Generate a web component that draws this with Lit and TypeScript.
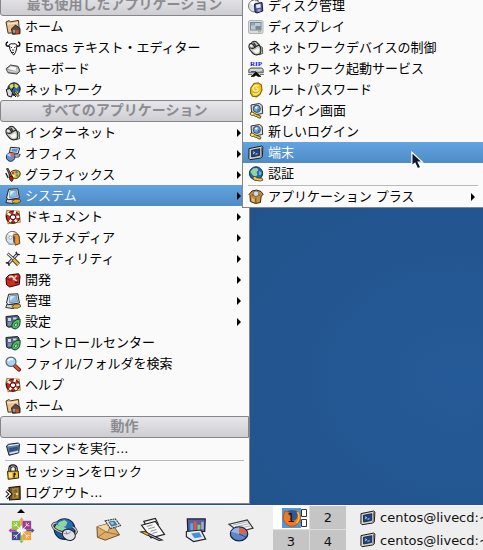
import { LitElement, html, css, svg, nothing, TemplateResult } from "lit";
import { customElement } from "lit/decorators.js";
import { classMap } from "lit/directives/class-map.js";

/* 16 x 16 glyphs used by the menus */
const wrench = svg`<path d="M7 13.500L10 11.200l5 .2 1 2-3.500 1.800-4.300-.2z" fill="#e0a92c" stroke="#3a2a08" stroke-width=".7"/>`;
const crtBase = svg`
  <path d="M2 11L.8 14.500l7.500 1.200 2.200-3.500z" fill="#d5d5cf" stroke="#222" stroke-width=".9"/>
  <path d="M3.600 1.300l9.200-.5 1.600 9.200-11 1.600L1.500 10z" fill="#ececea" stroke="#222" stroke-width="1"/>
  <path d="M4.800 2.800l6.700-.4 1 6.400-7.900 1z" fill="#86bdec" stroke="#3b5d86" stroke-width=".5"/>
  <path d="M5.200 3.200l4.600-.2-4.700 5z" fill="#d6eafb"/>`;
const lifebuoy = svg`
  <path d="M2 1.500L14 2.200 15.200 13 3.200 14.700.8 7z" fill="none" stroke="#a58322" stroke-width="1.200"/>
  <ellipse cx="8" cy="8.200" rx="6.600" ry="6.100" fill="#c9281c" stroke="#2a0705" stroke-width="1"/>
  <path d="M2.600 4.600l3 1.400M10.200 1.900L9.400 5M14.400 7.600l-3 .4M11.800 12.800l-2-2.400M4.600 12.900l1.800-2.400" stroke="#fff" stroke-width="2.300"/>
  <ellipse cx="8" cy="8.200" rx="2.700" ry="2.400" fill="#fafafa" stroke="#2a0705" stroke-width="1"/>`;
const mouse = svg`
  <path d="M10 5l4.300 2.200.4 6.300-3.500 1.300z" fill="#b7e6b4" stroke="#333" stroke-width=".8"/>
  <path d="M1 7.500C.8 5 1.500 3.500 3.200 3.400 4 1.500 6 .8 8.200 1.700l3 3.100c1.700 3.200 2.200 6.500.8 8.800-2.300 1.800-5 1.400-7.200-.4C2.800 11.500 1.300 10 1 7.500z" fill="#c9c9c5" stroke="#222" stroke-width="1.100"/>
  <path d="M3.200 3.500C5 3.800 6 5 6.500 6.800M2 7.800c2.200 1 4.200.5 5.500-1L11 5M5.500 2.500l2.300 3.200" stroke="#222" stroke-width="1.200" fill="none"/>
  <path d="M5 10.200c2-.2 3.800-1.200 5-2.800 1.200 2 1.400 4 .7 5.200-2 1-4.200.3-5.700-2.400z" fill="#f7f7f5"/><path d="M2.300 5.500l1.800.6" stroke="#fff" stroke-width="1.300"/>`;
const home = svg`
  <path d="M1 3l3-1.400 1.500 1.200L13.500 1.400l1 12-11.400.8z" fill="#e8c08c" stroke="#4b331a" stroke-width="1"/>
  <path d="M2.500 5l10.500-1.200" stroke="#f9e2bd" stroke-width="1.400"/>
  <path d="M6.500 10l4-4 4.500 3.500v5.200l-7.400.6z" fill="#5b4a48" stroke="#1d1514" stroke-width=".9"/>
  <path d="M7.800 10.800h2.400v3H7.800z" fill="#9b9ba2"/><path d="M10.800 11.200h2.900v3.300h-2.900z" fill="#d9541e"/>`;
const loginFace = svg`
  <path d="M3 2l8.500-1.500 2.700 2 .5 8-9 1.500-2-1.600z" fill="#d6dade" stroke="#333" stroke-width="1"/>
  <circle cx="8.800" cy="5.800" r="3.600" fill="#6fa3d2" stroke="#28435f" stroke-width=".9"/>
  <path d="M6.800 5c.6-1.300 1.800-1.600 3-1.300L8.500 6z" fill="#eef6fd"/><path d="M9.500 7.800l2-1.800" stroke="#28435f" stroke-width=".9"/>
  <path d="M2.500 9.500C4 8.500 6 9 6.500 10.500l6.500 2.700-.8 2-2.600-.7-.7-1.100-1.300.2-2-1.300c-1.300.5-3 0-3.500-1.300z" fill="#f0c435" stroke="#463407" stroke-width=".8"/>
  <circle cx="4.200" cy="10.700" r=".8" fill="#fff"/>`;
const controls = svg`
  <path d="M1 2.500L12.500 1.500 14 3v9l-10.500 1.200L1.500 12z" fill="#56647e" stroke="#1b2230" stroke-width="1"/>
  <path d="M3 4h3v3H3zM8 3.500h3.500v2H8z" fill="#cfd8e8"/><path d="M3 9h4M3 10.800h3" stroke="#9fb2d4" stroke-width="1"/>
  <path d="M7 13.700C6 9 9.500 5.500 15 5c.6 5-.7 9.400-5 10z" fill="#52bd6d" stroke="#0c4421" stroke-width="1"/>
  <path d="M9.300 12.200c0-2.500 1.400-3.600 3-3.200.2 2.200-.5 3.600-2 3.800" fill="#b5edb2" stroke="#0e5a2b" stroke-width=".9"/>`;
const globe = svg`
  <circle cx="8" cy="7.400" r="6.600" fill="#2465b3" stroke="#122c4b" stroke-width="1"/>
  <path d="M5 2.500l4-.6 1.500 2L8.700 6 9.500 9l-2.700 2L4 8.200 2.300 6z" fill="#93d4a4"/>
  <path d="M11 5l2.600 1.200-.8 3-2-.6z" fill="#6fb9c9"/>`;

const ICONS: Record<string, TemplateResult> = {
  home,
  emacs: svg`
    <path d="M3 2C.5 2.500.3 5.800 3 6.300l1.800-.8M13 2c2.500.5 2.700 3.800 0 4.300l-1.800-.8" fill="none" stroke="#111" stroke-width="1.400"/>
    <path d="M4 5.200C5.500 3.600 6.500 3.400 8 4c1.500-.6 2.500-.4 4 1.200L11.500 9l-1 3.500L8.800 15l-2-1.800L5 9.500z" fill="#fff" stroke="#111" stroke-width="1"/>
    <path d="M5.500 7l1.400.7M10.600 7l-1.400.7M7.500 9.500l.5 1.200.8-1.200M7 12.500h2" stroke="#111" stroke-width=".9" fill="none"/>`,
  keyboard: svg`
    <path d="M1 7.800L5.500 4l7.500 1.300 2 4.900-3 2.800-9-1.200z" fill="#a4a4a4" stroke="#444" stroke-width="1"/>
    <path d="M2.800 7.700l3-2.500 5.500 1-.6 3.700z" fill="#f4f4f4"/><path d="M11.800 6.300l2 3.800-2.800 1.500z" fill="#cfcfcf"/>
    <path d="M2.500 9.700l8.300 1.400" stroke="#dedede" stroke-width=".9"/>`,
  network: svg`
    <circle cx="9" cy="7" r="6.200" fill="#2d61b4" stroke="#111" stroke-width="1"/>
    <path d="M4.500 3L8 1.800 8.500 5 5.500 7zM9.800 1.500l3.700 2.300-1.700 2.600L9.500 5z" fill="#e9d932"/>
    <path d="M10 8l3.500 2-2 2.500z" fill="#89cd68"/><path d="M9 5l-3 5 5 5" stroke="#111" fill="none" stroke-width="1"/>
    <path d="M1.300 7.500L5 6.500l2.500 4.300L6.500 15l-3.700-1.200z" fill="#d8d8d8" stroke="#111" stroke-width="1"/>
    <path d="M10 8.500l4.300 5.200-1.800 1L9.300 10z" fill="#e2a523" stroke="#222" stroke-width=".7"/>`,
  mouse,
  office: svg`
    <path d="M5.500 1.300L14.700 2l-1.500 5.500L4.500 6.600z" fill="#ddeaf6" stroke="#223" stroke-width="1"/>
    <path d="M7 2.700l5.800.4-.8 2.900-5.800-.6z" fill="#5b9ad8"/>
    <path d="M4 8l9.500 1 1.700-1-1.200 3-8 .3z" fill="#d4d4d8" stroke="#223" stroke-width=".8"/>
    <circle cx="5.600" cy="11" r="4.300" fill="#668fd0" stroke="#1a2b4c" stroke-width="1"/>
    <path d="M5.600 11l-.3-4.200A4.300 4.300 0 0 1 9.700 10z" fill="#e4684c"/><path d="M5.600 11l-3.800-1.800A4.300 4.300 0 0 1 5.300 6.900z" fill="#b6d0f4"/>`,
  graphics: svg`
    <path d="M4.500 6.500c2-3 6.500-4.300 9.300-2.500 2.600 2 1.300 6-2 7.300-2.300.8-2.600-.7-4.500 0C5 12 3.500 9 4.500 6.500z" fill="#efb736" stroke="#3c2a08" stroke-width="1"/>
    <circle cx="8" cy="5.900" r="1.200" fill="#cf362b"/><circle cx="11.500" cy="5.300" r="1.200" fill="#3a78c9"/><circle cx="12.200" cy="8.500" r="1.200" fill="#3ba656"/><circle cx="8.700" cy="9" r="1" fill="#fff"/>
    <path d="M1.500 1.800l1.700-.3 3.700 8-1.300.8z" fill="#777" stroke="#111" stroke-width=".8"/>
    <path d="M4.500 10l2.600-1 1.200 3-1.500 2.600-2-1.800z" fill="#b12819" stroke="#2b0805" stroke-width=".8"/><path d="M.8 6l2.400 5" stroke="#222" stroke-width="1.400"/>`,
  system: svg`${crtBase}${wrench}`,
  lifebuoy,
  multimedia: svg`
    <circle cx="7.500" cy="8" r="6.600" fill="#dfe1e4" stroke="#666" stroke-width="1"/>
    <path d="M7.500 8L3 3.500A6 6 0 0 1 8 2z" fill="#fff"/><circle cx="5.500" cy="7.500" r="1.600" fill="#fff" stroke="#888" stroke-width=".7"/>
    <path d="M8 5.500C9.500 3.500 13.500 4 14 6l.8 7.500-4.500 1.700z" fill="#ef9433" stroke="#55340e" stroke-width=".9"/>
    <path d="M8 6l2.300.5-.3 7-1.700-1z" fill="#4d555c"/><path d="M3 13.800l7 .4" stroke="#8cb7d7" stroke-width="1.500"/>`,
  utilities: svg`
    <path d="M12.500 3L3 13" stroke="#222" stroke-width="3"/><path d="M12.500 3L3 13" stroke="#d8d8d8" stroke-width="1.300"/>
    <path d="M11 .9l1 2.300 2.800.4M.8 11.700l2.700.3.700 2.800" fill="none" stroke="#222" stroke-width="1.400"/>
    <path d="M2.500 2.500l6 5.500" stroke="#222" stroke-width="2.800"/><path d="M2.500 2.500l6 5.500" stroke="#eee" stroke-width="1.300"/>
    <path d="M8.500 8.500l5 5" stroke="#222" stroke-width="4.200"/><path d="M8.500 8.500l5 5" stroke="#e3b03a" stroke-width="2.700"/>`,
  develop: svg`
    <path d="M1 6l3-3 9.500-1.300L15 4l-.7 8.500L4.700 15 1.500 12.500z" fill="#cc2a22" stroke="#290504" stroke-width="1"/>
    <path d="M1.300 6.500l3.500 1.700 9.700-2.500" stroke="#7c1410" stroke-width=".9" fill="none"/>
    <path d="M4 5.500c1.500-1.700 3.600-1.500 4.300.3l3.500 3.700" stroke="#f5e6d6" stroke-width="1.600" fill="none"/>
    <path d="M11.500 3.500L8 8" stroke="#e0c9a0" stroke-width="1.500"/><path d="M10 10.500l2.800-.6" stroke="#111" stroke-width="1.500"/>`,
  controls,
  search: svg`
    <path d="M9.500 9.500l4.500 4.200" stroke="#5e1407" stroke-width="3.800" stroke-linecap="round"/><path d="M9.800 9.700l4 3.800" stroke="#e94f25" stroke-width="2.300" stroke-linecap="round"/>
    <ellipse cx="6" cy="5.800" rx="5" ry="4.600" fill="#a7d4f4" stroke="#5a6a7a" stroke-width="1.200"/><path d="M3 5.200C4 3.200 6 2.800 8 3.500" stroke="#fff" stroke-width="1.500" fill="none"/>`,
  run: svg`
    <path d="M1.500 5l2-1.700L13.500 2l1 1.300-.8 8.500-9.700 2.500z" fill="#5c7ea8" stroke="#1b2430" stroke-width="1"/>
    <path d="M2.200 5.600l11.500-1.900.2-.9L4 4.100z" fill="#eef3f7"/><path d="M4 7.200l9-1.700-.4 3.500-8 2z" fill="#35507a"/><path d="M4.500 12.600l8.800-2" stroke="#dfe6ed" stroke-width="1.500"/>`,
  lock: svg`
    <path d="M4.800 8V4.500C5 .8 11.300.8 11.300 4.500V8" fill="none" stroke="#111" stroke-width="3"/><path d="M4.800 8V4.500C5 1.200 11.300 1.200 11.300 4.500V8" fill="none" stroke="#ccc" stroke-width="1"/>
    <path d="M2.500 7.300L13.200 7l.5 7-10.500 1.300z" fill="#f2bd24" stroke="#33250a" stroke-width="1"/><path d="M4 9h3v4.500H4.300z" fill="#fae88c"/>
    <path d="M8.500 9.200a1.300 1.300 0 1 1 1 2.200l.5 2H8.200l.3-2z" fill="#111"/>`,
  logout: svg`
    <path d="M4 2.500l11-1.200.2 13L4.500 15z" fill="#6b5525" stroke="#1c1506" stroke-width="1.100"/><path d="M7 3.500l6.500-.7.2 10.500-6.200.5z" fill="#a98540"/>
    <path d="M8.500 5l3.700-.4v2.800l-3.500.4zM8.800 9.200l2-.2v3l-2 .2z" fill="#7f6227"/><circle cx="12" cy="9" r="1" fill="#f9e7a8"/>
    <path d="M1.500 5.500L5.500 9l-4 4" fill="none" stroke="#111" stroke-width="3.200"/><path d="M1.500 5.500L5.500 9l-4 4" fill="none" stroke="#fff" stroke-width="1.300"/>`,
  disk: svg`
    <circle cx="6.500" cy="8" r="6" fill="#e0e2e6" stroke="#777" stroke-width="1"/><path d="M6.500 8L2 5A6 6 0 0 1 7 2.500z" fill="#fff"/><path d="M3.500 2l4-1 3 1.800" stroke="#333" fill="none" stroke-width="1"/>
    <path d="M6.500 6l7.500-1.500.8 8.500L9 15l-2-1z" fill="#4c5a9a" stroke="#151a38" stroke-width="1"/><path d="M8 6.700l4.500-.9.3 3.700-4.300.8z" fill="#e9ebf4"/><path d="M9.500 11.500l3-.6.2 2.300-2.900.6z" fill="#a9b0cf"/>`,
  display: svg`
    <rect x=".5" y="1.500" width="14.500" height="13" rx="1.500" fill="#dcdcdc" stroke="#b4b4b4"/><rect x="2.500" y="3.500" width="10.500" height="7.500" fill="#94a4b0" stroke="#7c868d"/>
    <path d="M3 6.500h4V4h5.500v3H8v3.500H3z" fill="#b9cad8"/><path d="M7.500 7h5v3.500h-5z" fill="#768999"/><path d="M10 12.800h3" stroke="#8bb07a"/>`,
  rip: svg`
    <text x="8" y="5.300" text-anchor="middle" font-family="Liberation Serif, serif" font-weight="700" font-size="7" fill="#1212d8">RIP</text>
    <path d="M.8 8.500L3 7h10.500l1.700 1.300v3.500H.8z" fill="#b9bcbe" stroke="#555" stroke-width="1"/><path d="M2 8.900h12" stroke="#f2f2f2"/><path d="M3 10.500h5" stroke="#555"/><circle cx="13" cy="10.500" r=".8" fill="#4db84d"/>
    <path d="M8 11l5 4.500h-3L8 14l-2 1.500H3z" fill="#050505" stroke="#050505" stroke-width=".6"/><path d="M0 13.500h4M12 13.500h4" stroke="#777"/>`,
  password: svg`
    <path d="M6 1.500l4-.7 3.300 2L14 8l-2 4.500-3.500 2.300-4-.6L2.500 11l.3-5z" fill="#f1c21e" stroke="#8a6503" stroke-width="1.100"/>
    <path d="M10.500 4C7.500 2.500 4.600 4.600 5 7.200c.5 2.300 4 2.700 4.900.9.400-1.600-1.200-2.500-2.300-1.700M5 11.500c2.200 1.400 5 .6 6.400-2" fill="none" stroke="#fdf3a0" stroke-width="1.400"/>
    <path d="M4.700 9.300c2 2 4.600 1.700 6.200 0" fill="none" stroke="#c4930a" stroke-width=".8"/>`,
  login: loginFace,
  terminal: svg`
    <path d="M1 3.600L13.800 1l1.100 1-.6 9.800L12.600 13 2 14.700.9 13.500z" fill="#d3d4cf" stroke="#1d1d1b" stroke-width="1"/>
    <path d="M3.400 5.300l8.400-1.600-.3 6.800-7.900 1.500z" fill="#21437e" stroke="#0f1d38" stroke-width=".8"/>
    <path d="M5 6.700l1.700 1-1.600 1.200M7.500 9.200l2-.4" stroke="#fff" stroke-width=".8" fill="none"/><path d="M13.600 2.200L13 12.300" stroke="#6f6f6b" stroke-width="1"/>`,
  auth: svg`${globe}<path d="M5 11c1.300-1 3-.6 3.600.8l5.600.6.700 1.800-3 .9-4-.9c-1.500.6-3.200-.6-2.900-3.200z" fill="#f0cf4e" stroke="#4a3809" stroke-width=".8"/>`,
  box: svg`
    <path d="M1 5.500L4 2l4.500-1 4.500 1.500 2.200 3-2 1.500-.8 6.500-5 1-5-2-.4-6z" fill="#c79244" stroke="#3a270c" stroke-width="1"/>
    <path d="M3 6l5 2.500L12.500 6 9 3.500z" fill="#7b5522"/><circle cx="8" cy="4.700" r="2.800" fill="#d7d9dc" stroke="#666" stroke-width=".8"/><path d="M7.800 9v6" stroke="#765017"/><path d="M3.500 9l3 1.300v3L4 12.200z" fill="#e6bd77"/>`,
};

/* 28 x 28 launcher pictures */
const petal = (angle: number, fill: string, tip: string) => svg`
  <g transform="rotate(${angle} 14 14)">
    <path d="M4 4h9v9H4z" fill=${fill}/><path d="M6 6l7 7M9 5.500v3.500H5.500" stroke="#fff" stroke-width=".7" fill="none"/>
    <path d="M14 .5l2.500 3H15v6h-2v-6h-1.500z" fill=${tip}/><path d="M14 8.500l3 3.500-3 2-3-2z" fill="#fff" fill-opacity=".75"/>
  </g>`;
const LAUNCHERS: { name: string; art: TemplateResult }[] = [
  { name: "メニュー", art: svg`${petal(0, "#93c83e", "#e9a24b")}${petal(90, "#9c3d8e", "#55508f")}${petal(180, "#eda33a", "#8fc74a")}${petal(270, "#414a8c", "#b34a96")}` },
  { name: "ブラウザ", art: svg`
    <circle cx="14" cy="12.500" r="10.700" fill="#1f5ba6" stroke="#0f2744" stroke-width="1.200"/>
    <path d="M8 4.500l6-1.800 3 2.600-2 3.400 1.300 3-4.300 2.500-6-.5-2-3z" fill="#8fd6a4"/><path d="M17 4l4 2 1.500 4-3.500.7z" fill="#4d9ddd"/>
    <ellipse cx="14" cy="12" rx="12.800" ry="5" transform="rotate(17 14 12)" fill="none" stroke="#2a2a2a" stroke-width="2.800"/><ellipse cx="14" cy="12" rx="12.800" ry="5" transform="rotate(17 14 12)" fill="none" stroke="#bfc2c2" stroke-width="1.300"/>
    <path d="M5.500 6C9.500 1.600 17 1 21.500 5.500L23 11 16 11.500 6 8z" fill="#2b6ab6"/><path d="M8 5.500l6-2.500 3 2.500-1.500 3.800-3.500 1.200L7 8z" fill="#8fd6a4"/>
    <ellipse cx="18.500" cy="18.500" rx="7" ry="5.500" transform="rotate(24 18.500 18.500)" fill="#dfe1ea" stroke="#222" stroke-width="1.100"/><path d="M13 16.500c3 2.200 6.500 0 8-1.500M16.500 17.800l-.8-3" fill="none" stroke="#777" stroke-width=".9"/>` },
  { name: "メール", art: svg`
    <path d="M2 10l15-4 8.500 12.500-15 5.500L2.500 21z" fill="#dcae6b" stroke="#6a4a20" stroke-width="1"/><path d="M2 10l11 6 4.500-10" fill="#f3d8a5" stroke="#8b6430" stroke-width=".8"/><path d="M3 21l7.500-5.500L25 18.500" fill="none" stroke="#8b6430" stroke-width=".8"/>
    <path d="M10.500 4l10.500-2 5.500 7-10.500 3z" fill="#eef0f0" stroke="#333" stroke-width="1.100" stroke-dasharray="2 .6"/><path d="M13.500 5l6.500-1.300 3.500 4.500-6.500 1.800z" fill="#3f78ac"/><path d="M15.500 5.500l3-.7 1.700 2-2.500 1.500z" fill="#94cfa1"/>` },
  { name: "ワープロ", art: svg`
    <path d="M5 4.500L17 1.500l3 6-11 5z" fill="#f3f3f3" stroke="#222" stroke-width="1.200"/><path d="M2.500 8.500l14.500-4L26.500 18l-14 3.500z" fill="#f8f8f8" stroke="#222" stroke-width="1.200"/>
    <path d="M8 9.800l6-1.700M9.500 12.300l7-1.900M12 14.800l6-1.700M14 17l5-1.400" stroke="#8a8e97" stroke-width="1"/>
    <path d="M2 15.500l4-.5 18 8.800-3.200.5z" fill="#b8c3e2" stroke="#222" stroke-width="1.100"/><path d="M2.500 15.500l3.500-.3 5 2.500-2.500 1.300z" fill="#e9b94e" stroke="#45330c" stroke-width=".7"/>` },
  { name: "プレゼンテーション", art: svg`
    <path d="M4.500 2h18.500l-.5 13L5 15.500z" fill="#5b6298" stroke="#1c1f3a" stroke-width="1.300"/><path d="M7.500 14.500V6.500h3v8z" fill="#52a7ed"/><path d="M11 14V4.500h3V14z" fill="#dd5644"/><path d="M15 14V8h3v6z" fill="#7fcf72"/><path d="M19 13V5h2.500v8z" fill="#aaaed0"/>
    <path d="M3.500 15L18.500 13.500l5 9.500-12.500 2.500-7.500-5z" fill="#e6ecf2" stroke="#222" stroke-width="1.200"/><path d="M8.500 17l8.500-1.300 2.500 5L12 22z" fill="#4390e2"/>` },
  { name: "表計算", art: svg`
    <path d="M2 7.500L21 3l6 8.500-14.500 4z" fill="#f4f4f4" stroke="#333" stroke-width="1.200"/><path d="M6 8.500l15-3.500M8 10.500l15-3.700M10 12.500l15-3.600" stroke="#9a9da6" stroke-width=".8"/>
    <ellipse cx="12.500" cy="17.500" rx="9" ry="7.200" fill="#5d86c7" stroke="#17233f" stroke-width="1.300"/><path d="M12.500 17.500V10.800a9 7.200 0 0 1 8.300 5.700z" fill="#e8613e"/><path d="M12.500 17.500V10.800a9 7.200 0 0 0-8.300 4.500z" fill="#8fb4e6"/><path d="M12.500 17.500l7.500 3.500" stroke="#27406d" stroke-width=".8"/>` },
];

interface Entry { label: string; icon?: string; kind?: "title" | "rule"; sub?: boolean; active?: boolean; children?: Entry[]; pointer?: boolean }

const SYSTEM_MENU: Entry[] = [
  { label: "ディスク管理", icon: "disk" },
  { label: "ディスプレイ", icon: "display" },
  { label: "ネットワークデバイスの制御", icon: "mouse" },
  { label: "ネットワーク起動サービス", icon: "rip" },
  { label: "ルートパスワード", icon: "password" },
  { label: "ログイン画面", icon: "login" },
  { label: "新しいログイン", icon: "login" },
  { label: "端末", icon: "terminal", active: true, pointer: true },
  { label: "認証", icon: "auth" },
  { label: "", kind: "rule" },
  { label: "アプリケーション プラス", icon: "box", sub: true },
];

const MAIN_MENU: Entry[] = [
  { label: "最も使用したアプリケーション", kind: "title" },
  { label: "ホーム", icon: "home" },
  { label: "Emacs テキスト・エディター", icon: "emacs" },
  { label: "キーボード", icon: "keyboard" },
  { label: "ネットワーク", icon: "network" },
  { label: "すべてのアプリケーション", kind: "title" },
  { label: "インターネット", icon: "mouse", sub: true },
  { label: "オフィス", icon: "office", sub: true },
  { label: "グラフィックス", icon: "graphics", sub: true },
  { label: "システム", icon: "system", sub: true, active: true, children: SYSTEM_MENU },
  { label: "ドキュメント", icon: "lifebuoy", sub: true },
  { label: "マルチメディア", icon: "multimedia", sub: true },
  { label: "ユーティリティ", icon: "utilities", sub: true },
  { label: "開発", icon: "develop", sub: true },
  { label: "管理", icon: "system", sub: true },
  { label: "設定", icon: "controls", sub: true },
  { label: "コントロールセンター", icon: "controls" },
  { label: "ファイル/フォルダを検索", icon: "search" },
  { label: "ヘルプ", icon: "lifebuoy" },
  { label: "ホーム", icon: "home" },
  { label: "動作", kind: "title" },
  { label: "コマンドを実行...", icon: "run" },
  { label: "", kind: "rule" },
  { label: "セッションをロック", icon: "lock" },
  { label: "ログアウト...", icon: "logout" },
];

const smallIcon = (name: string) => html`<svg class="icon" viewBox="0 0 16 16" aria-hidden="true">${ICONS[name]}</svg>`;

@customElement("kde-menu")
class KdeMenu extends LitElement {
  static properties = { entries: { attribute: false } };
  declare entries: Entry[];

  static styles = css`
    :host { display: block; box-sizing: border-box; background: #fafafa; border: 0 solid #858585; border-width: 0 1px 1px 0; }
    :host([nested]) { border-width: 0 0 1px 1px; }
    .list { list-style: none; margin: 0; padding: 0; }
    .row { position: relative; }
    .title {
      box-sizing: border-box; height: 22px; line-height: 18px; text-align: center;
      border: 1px solid #85858a; border-radius: 3px 0 0 3px;
      background: linear-gradient(#e6e6eb, #cdcdd2); color: #8c8c8f;
      font-size: 14px; font-weight: 700; white-space: nowrap;
    }
    .rule { height: 2px; margin: 0 5px; background: linear-gradient(#fafafa 50%, #b9b9b9 50%); }
    .item {
      all: unset; box-sizing: border-box; display: flex; align-items: center; gap: 4px;
      width: 100%; height: 21px; padding: 0 7px 0 5px; color: #000; white-space: nowrap;
    }
    .active { color: #fff; background: linear-gradient(#62a3e1, #4f8cc6); }
    .icon { width: 16px; height: 16px; flex: none; }
    .label { flex: 1; line-height: 21px; }
    .arrow { width: 5px; height: 8px; flex: none; fill: #000; }
    .submenu { position: absolute; left: 242px; bottom: -2px; width: calc(100vw - 242px); z-index: 1; }
    .pointer { position: absolute; left: 168px; top: 9px; width: 14px; height: 20px; z-index: 2; }
  `;

  private row(e: Entry): TemplateResult {
    if (e.kind === "title") return html`<li class="title">${e.label}</li>`;
    if (e.kind === "rule") return html`<li class="rule" role="separator"></li>`;
    return html`<li class="row" role="none">
      <button class=${classMap({ item: true, active: !!e.active })} role="menuitem">
        ${smallIcon(e.icon!)}<span class="label">${e.label}</span>
        ${e.sub ? html`<svg class="arrow" viewBox="0 0 5 8"><path d="M0 0l4 4-4 4z"/></svg>` : nothing}
      </button>
      ${e.children ? html`<kde-menu nested class="submenu" .entries=${e.children}></kde-menu>` : nothing}
      ${e.pointer ? html`<svg class="pointer" viewBox="0 0 16 22" aria-hidden="true">
        <path d="M1 1v15.500l3.500-3 3 6.500 3.700-1.700-2.900-6H13z" fill="#10162e" stroke="#fff" stroke-width="1.400"/></svg>` : nothing}
    </li>`;
  }

  render() {
    return html`<ul class="list" role="menu">${this.entries.map((e) => this.row(e))}</ul>`;
  }
}

@customElement("kde-panel")
class KdePanel extends LitElement {
  static styles = css`
    :host { display: flex; height: 45px; box-sizing: border-box; overflow: hidden; background: #eee; border-top: 1px solid #f8f8f8; font-size: 13px; }
    button { all: unset; box-sizing: border-box; }
    .launch { position: relative; flex: none; width: 44px; height: 44px; display: grid; place-items: center; padding-top: 4px; }
    .launch:first-child { width: 42px; }
    .art { width: 27px; height: 27px; }
    .up { position: absolute; top: 3px; left: 17px; width: 8px; height: 4px; }
    .pager { flex: none; display: grid; grid-template: 23px 23px / 36px 36px; gap: 1px; margin-left: 11px; background: #ddd; align-self: flex-start; }
    .desk { position: relative; background: #c5c5c5; color: #111; text-align: center; line-height: 23px; }
    .current { background: #fff; }
    .preview { position: absolute; left: 9px; top: 1px; width: 26px; height: 21px; }
    .number { position: relative; }
    .tasks { flex: 1; min-width: 0; display: grid; grid-template-rows: 23px 22px; align-content: start; margin-left: 14px; }
    .task { display: flex; align-items: center; gap: 4px; white-space: nowrap; color: #111; overflow: hidden; }
    .icon { width: 16px; height: 16px; flex: none; }
  `;

  private preview = html`<svg class="preview" viewBox="0 0 26 21" aria-hidden="true">
    <rect x="0" y="1" width="19" height="20" fill="#5795d4"/>
    <circle cx="10" cy="11" r="8" fill="#2c5a9d"/>
    <path d="M3 4c2 1 3 .8 4.500 1L7 8l3 1.500-2 2.500c2 2.500 6 1.500 7-1.500s.5-5-1.500-7c4 1.500 6 5.500 4.500 10S12 20 8 19 .5 14 1.500 8.500z" fill="#ee7b22" stroke="#a8470f" stroke-width=".7"/>
    <path d="M15.500 5c2.300 3.500 2 8-1 11" stroke="#f8c646" stroke-width="1.500" fill="none"/>
    <path d="M19.500 2.500h5v7h-5zM19.500 12.500h5v7h-5z" fill="#fff" stroke="#333"/></svg>`;

  render() {
    return html`
      ${LAUNCHERS.map((l, i) => html`<button class="launch" aria-label=${l.name}>
        ${i === 0 ? html`<svg class="up" viewBox="0 0 8 4"><path d="M0 4l4-4 4 4z"/></svg>` : nothing}
        <svg class="art" viewBox="0 0 28 28" aria-hidden="true">${l.art}</svg></button>`)}
      <div class="pager">
        ${[1, 2, 3, 4].map((n) => html`<button class=${classMap({ desk: true, current: n === 1 })}>
          ${n === 1 ? this.preview : nothing}<span class="number">${n}</span></button>`)}
      </div>
      <div class="tasks">
        ${[1, 2].map(() => html`<button class="task">${smallIcon("terminal")}<span>centos@livecd:~</span></button>`)}
      </div>`;
  }
}

@customElement("app-root")
class AppRoot extends LitElement {
  static styles = css`
    :host {
      display: flex; flex-direction: column; height: 100vh; overflow: hidden;
      font: 13px "DejaVu Sans", "Noto Sans CJK JP", sans-serif; cursor: default;
    }
    .desktop {
      flex: 1; min-height: 0; display: flex; align-items: flex-end; overflow: hidden; padding-bottom: 1px;
      background: radial-gradient(ellipse at 95% 75%, #255a98, #22548d 40%, #1f4c85 75%);
    }
    .start { width: 250px; flex: none; }
  `;

  render() {
    return html`
      <main class="desktop"><kde-menu class="start" .entries=${MAIN_MENU}></kde-menu></main>
      <kde-panel></kde-panel>`;
  }
}
